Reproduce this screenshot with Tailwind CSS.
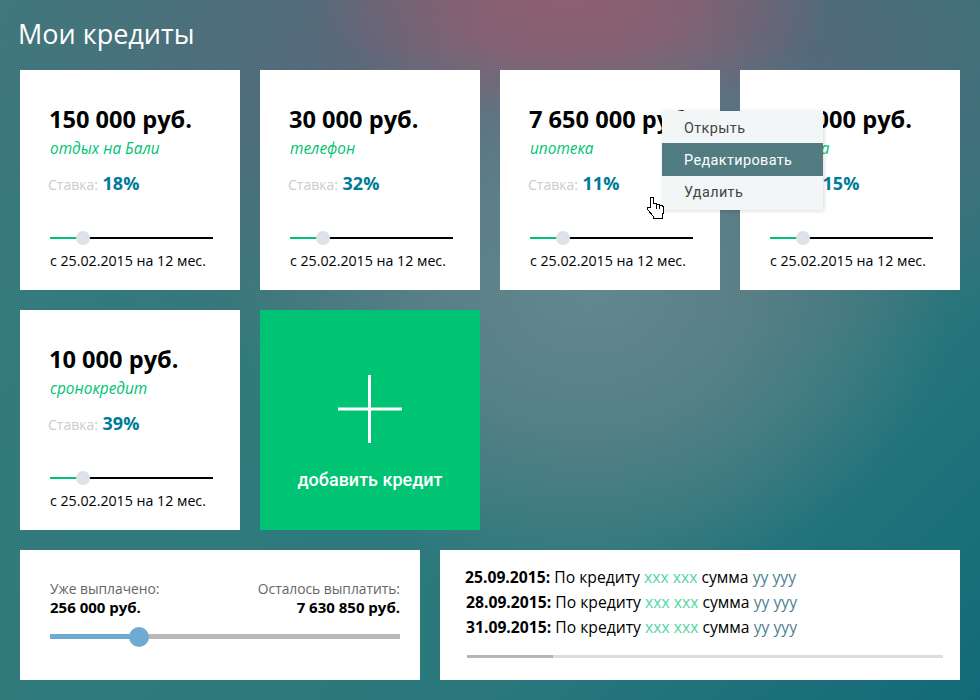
<!DOCTYPE html>
<html lang="ru">
  <head>
    <meta charset="UTF-8" />
    <meta name="viewport" content="width=device-width, initial-scale=1.0" />
    <title>Мои кредиты</title>
    <script src="https://cdn.jsdelivr.net/npm/@tailwindcss/browser@4"></script>
  </head>
  <body class="font-['Open_Sans',sans-serif] overflow-hidden">
    <div class="relative w-[980px] h-[700px] overflow-hidden bg-[radial-gradient(ellipse_260px_120px_at_570px_0px,#8f5f70_0%,#8f5f70bb_45%,#8f5f7000_100%),radial-gradient(ellipse_360px_300px_at_590px_290px,#63878f_0%,#5f8289cc_45%,#5f828900_100%),radial-gradient(ellipse_640px_330px_at_570px_60px,#6b6079_0%,#6b607900_100%),linear-gradient(135deg,#3a7a7c_0%,#2f7a7c_45%,#2a787c_70%,#126a78_100%)]">
      <h1 class="pt-[16px] pl-[18px] h-[70px] text-[27px] leading-[36px] text-white">Мои кредиты</h1>

      <!-- кредиты -->
      <div class="grid grid-cols-[220px_220px_220px_220px] auto-rows-[220px] gap-5 pl-5">
        <div class="bg-white pl-[29px] pt-[34px] relative">
          <div class="text-[23.6px] leading-[30px] font-bold text-black">150 000 руб.</div>
          <div class="pl-px text-[15.4px] leading-[20px] italic text-[#00c373] mt-[5px]">отдых на Бали</div>
          <div class="-ml-px mt-[12px] leading-[24px] text-[14px] text-[#cccccc]">Ставка: <span class="ml-px text-[18px] font-bold text-[#007a99]">18%</span></div>
          <div class="ml-px mt-[40px] w-[163px] h-[2px] bg-black relative">
            <div class="h-[2px] w-[26px] bg-[#00c373]"></div>
            <div class="absolute left-[26px] -top-[6px] w-[14px] h-[14px] rounded-full bg-[#dde2ea]"></div>
          </div>
          <div class="ml-px mt-[12px] text-[14.2px] leading-[20px] text-black">с 25.02.2015 на 12 мес.</div>
        </div>

        <div class="bg-white pl-[29px] pt-[34px] relative">
          <div class="text-[23.6px] leading-[30px] font-bold text-black">30 000 руб.</div>
          <div class="pl-px text-[15.4px] leading-[20px] italic text-[#00c373] mt-[5px]">телефон</div>
          <div class="-ml-px mt-[12px] leading-[24px] text-[14px] text-[#cccccc]">Ставка: <span class="ml-px text-[18px] font-bold text-[#007a99]">32%</span></div>
          <div class="ml-px mt-[40px] w-[163px] h-[2px] bg-black relative">
            <div class="h-[2px] w-[26px] bg-[#00c373]"></div>
            <div class="absolute left-[26px] -top-[6px] w-[14px] h-[14px] rounded-full bg-[#dde2ea]"></div>
          </div>
          <div class="ml-px mt-[12px] text-[14.2px] leading-[20px] text-black">с 25.02.2015 на 12 мес.</div>
        </div>

        <div class="bg-white pl-[29px] pt-[34px] relative">
          <div class="text-[23.6px] leading-[30px] font-bold text-black">7 650 000 руб.</div>
          <div class="pl-px text-[15.4px] leading-[20px] italic text-[#00c373] mt-[5px]">ипотека</div>
          <div class="-ml-px mt-[12px] leading-[24px] text-[14px] text-[#cccccc]">Ставка: <span class="ml-px text-[18px] font-bold text-[#007a99]">11%</span></div>
          <div class="ml-px mt-[40px] w-[163px] h-[2px] bg-black relative">
            <div class="h-[2px] w-[26px] bg-[#00c373]"></div>
            <div class="absolute left-[26px] -top-[6px] w-[14px] h-[14px] rounded-full bg-[#dde2ea]"></div>
          </div>
          <div class="ml-px mt-[12px] text-[14.2px] leading-[20px] text-black">с 25.02.2015 на 12 мес.</div>
        </div>

        <div class="bg-white pl-[29px] pt-[34px] relative">
          <div class="text-[23.6px] leading-[30px] font-bold text-black">250 000 руб.</div>
          <div class="pl-px text-[15.4px] leading-[20px] italic text-[#00c373] mt-[5px]">машина</div>
          <div class="-ml-px mt-[12px] leading-[24px] text-[14px] text-[#cccccc]">Ставка: <span class="ml-px text-[18px] font-bold text-[#007a99]">15%</span></div>
          <div class="ml-px mt-[40px] w-[163px] h-[2px] bg-black relative">
            <div class="h-[2px] w-[26px] bg-[#00c373]"></div>
            <div class="absolute left-[26px] -top-[6px] w-[14px] h-[14px] rounded-full bg-[#dde2ea]"></div>
          </div>
          <div class="ml-px mt-[12px] text-[14.2px] leading-[20px] text-black">с 25.02.2015 на 12 мес.</div>
        </div>

        <div class="bg-white pl-[29px] pt-[34px] relative">
          <div class="text-[23.6px] leading-[30px] font-bold text-black">10 000 руб.</div>
          <div class="pl-px text-[15.4px] leading-[20px] italic text-[#00c373] mt-[5px]">сронокредит</div>
          <div class="-ml-px mt-[12px] leading-[24px] text-[14px] text-[#cccccc]">Ставка: <span class="ml-px text-[18px] font-bold text-[#007a99]">39%</span></div>
          <div class="ml-px mt-[40px] w-[163px] h-[2px] bg-black relative">
            <div class="h-[2px] w-[26px] bg-[#00c373]"></div>
            <div class="absolute left-[26px] -top-[6px] w-[14px] h-[14px] rounded-full bg-[#dde2ea]"></div>
          </div>
          <div class="ml-px mt-[12px] text-[14.2px] leading-[20px] text-black">с 25.02.2015 на 12 мес.</div>
        </div>

        <!-- добавить -->
        <div class="bg-[#00c373] flex flex-col items-center pt-[65px]">
          <svg width="64" height="68" viewBox="0 0 64 68" fill="none" stroke="white" stroke-width="3">
            <path d="M31.5 0V68M0 34H64" />
          </svg>
          <div class="mt-[25px] font-['Roboto',sans-serif] font-medium text-[18px] leading-[24px] text-white">добавить кредит</div>
        </div>
      </div>

      <!-- нижние блоки -->
      <div class="flex gap-5 pl-5 mt-5">
        <div class="w-[400px] h-[130px] bg-white pl-[30px] pr-5 pt-[30px]">
          <div class="flex justify-between text-[13.8px] leading-[18px]">
            <div class="text-[#666666]">
              Уже выплачено:
              <div class="text-[15px] font-bold text-black">256 000 руб.</div>
            </div>
            <div class="text-[#666666] text-right">
              Осталось выплатить:
              <div class="text-[15px] font-bold text-black">7 630 850 руб.</div>
            </div>
          </div>
          <div class="relative h-[5px] mt-[18px] bg-[#b9b9b9]">
            <div class="h-[5px] w-[80px] bg-[#6eaad2]"></div>
            <div class="absolute left-[79px] -top-[7px] w-5 h-5 rounded-full bg-[#6eaad2]"></div>
          </div>
        </div>

        <div class="w-[520px] h-[130px] bg-white pl-[25px] pt-[15px]">
          <div class="text-[15.7px] leading-[25px] text-black">
            <div><b>25.09.2015:</b> По кредиту <span class="text-[#4fd6a3]">ххх ххх</span> сумма <span class="text-[#4d7f92]">уу ууу</span></div>
            <div class="pl-px"><b>28.09.2015:</b> По кредиту <span class="text-[#4fd6a3]">ххх ххх</span> сумма <span class="text-[#4d7f92]">уу ууу</span></div>
            <div class="pl-px"><b>31.09.2015:</b> По кредиту <span class="text-[#4fd6a3]">ххх ххх</span> сумма <span class="text-[#4d7f92]">уу ууу</span></div>
          </div>
          <div class="ml-[2px] mt-[15px] w-[476px] h-[3px] bg-[#dddddd]">
            <div class="w-[86px] h-[3px] bg-[#b5b5b5]"></div>
          </div>
        </div>
      </div>

      <!-- контекстное меню -->
      <div class="absolute left-[662px] top-[111px] w-[161px] h-[99px] bg-[#f3f6f7] shadow-[1px_1px_4px_rgba(0,0,0,0.15)] font-['Roboto',sans-serif] text-[14.4px] text-[#444444] tracking-[0.4px]">
        <div class="h-[32px] pl-[22px] leading-[36px]">Открыть</div>
        <div class="h-[33px] pl-[22px] leading-[35px] bg-[#527c82] text-white">Редактировать</div>
        <div class="h-[34px] pl-[22px] leading-[33px]">Удалить</div>
      </div>

      <!-- курсор -->
      <svg class="absolute left-[646px] top-[197px]" width="20" height="24" viewBox="0 0 20 24" fill="white" stroke="black" stroke-width="1" shape-rendering="crispEdges">
        <path d="M4.5 .5h3v6h3v1h3v1h3v1h1v6l-1 2v4h-9v-2l-6-7v-2h3zM10.5 7.5v4M13.5 8.5v3" />
      </svg>
    </div>
  </body>
</html>
